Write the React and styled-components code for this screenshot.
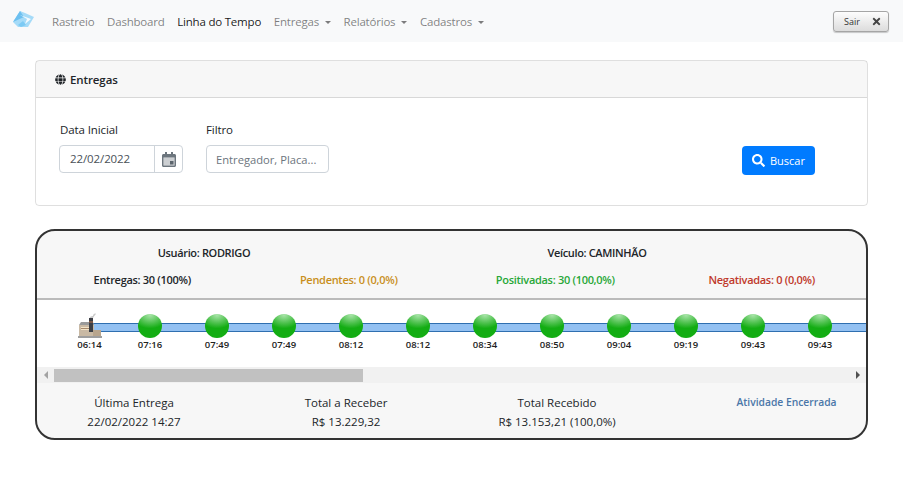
import React from "react";
import styled, { createGlobalStyle } from "styled-components";
import { FaGlobe, FaSearch, FaTimes } from "react-icons/fa";

const GlobalStyle = createGlobalStyle`
  html, body {
    margin: 0;
    padding: 0;
    background: #fff;
    color: #212529;
    font-family: "Open Sans", "Noto Sans", sans-serif;
    font-size: 12px;
  }
  * {
    box-sizing: border-box;
  }
`;

const navItems = [
  { label: "Rastreio" },
  { label: "Dashboard" },
  { label: "Linha do Tempo", active: true },
  { label: "Entregas", caret: true },
  { label: "Relatórios", caret: true },
  { label: "Cadastros", caret: true },
];

const stops = ["07:16", "07:49", "07:49", "08:12", "08:12", "08:34", "08:50", "09:04", "09:19", "09:43", "09:43"];

const Logo = () => (
  <svg width="24" height="22" viewBox="0 0 24 22">
    <polygon points="9,1 14,3 23,7 17,17 7,17 2,12" fill="#a5dbf8" />
    <polygon points="9,1 13,7 2,12" fill="#6cc0f0" />
    <polygon points="9,5 20,9 14,14 16,9" fill="#f4fafe" />
    <polygon points="7,15 12,11 15,15 10,17" fill="#7ccaf4" />
  </svg>
);

const CalendarIcon = () => (
  <svg width="14" height="15" viewBox="0 0 14 15">
    <path
      d="M3 0h2v2h4V0h2v2h1.5c.8 0 1.5.7 1.5 1.5v10c0 .8-.7 1.5-1.5 1.5h-11C.7 15 0 14.300 0 13.500v-10C0 2.700.7 2 1.500 2H3V0zM1.500 5.500v8h11v-8h-11z"
      fill="#6c757d"
    />
    <rect x="1.500" y="5.500" width="11" height="8" fill="#6c757d" opacity="0.35" />
    <rect x="8" y="9" width="3.500" height="3.500" fill="#5c656d" />
  </svg>
);

const FactoryIcon = () => (
  <svg width="24" height="26" viewBox="0 0 24 26">
    <path d="M12 6c-1-2 1-3 3-3 0-2 2-3 3-2-1 1-2 2-3 4-1 1-2 1-3 1z" fill="#c9c9c9" />
    <rect x="1" y="12" width="15" height="11" fill="#c9b9a4" />
    <polygon points="1,12 3,9 15,9 16,12" fill="#9a9a9a" />
    <rect x="3" y="14" width="11" height="3" fill="#f3e3c6" />
    <rect x="3" y="15" width="11" height="1" fill="#a5876a" />
    <rect x="11" y="5" width="4" height="14" fill="#3c3f46" />
    <rect x="11" y="8" width="4" height="2" fill="#7d5a48" />
    <rect x="15" y="17" width="8" height="6" fill="#b8a58d" />
    <rect x="0" y="23" width="24" height="2" fill="#9e9e9e" />
  </svg>
);

const App = () => {
  return (
    <>
      <GlobalStyle />
      <Navbar>
        <Brand>
          <Logo />
        </Brand>
        <NavList>
          {navItems.map((item) => (
            <NavLink key={item.label} $active={item.active} $caret={item.caret}>
              {item.label}
            </NavLink>
          ))}
        </NavList>
        <LogoutButton>
          Sair
          <FaTimes size={11} color="#444" />
        </LogoutButton>
      </Navbar>

      <Page>
        <Card>
          <CardHeader>
            <FaGlobe size={11} />
            Entregas
          </CardHeader>
          <CardBody>
            <Field>
              <Label $inset>Data Inicial</Label>
              <InputGroup>
                <DateValue>22/02/2022</DateValue>
                <Addon>
                  <CalendarIcon />
                </Addon>
              </InputGroup>
            </Field>
            <Field>
              <Label>Filtro</Label>
              <TextInput placeholder="Entregador, Placa..." />
            </Field>
            <SearchButton>
              <FaSearch size={13} />
              Buscar
            </SearchButton>
          </CardBody>
        </Card>

        <TimelineCard>
          <InfoRow>
            <InfoTitle>Usuário: RODRIGO</InfoTitle>
            <InfoTitle>Veículo: CAMINHÃO</InfoTitle>
          </InfoRow>
          <StatusRow>
            <Status $color="#212529">Entregas: 30 (100%)</Status>
            <Status $color="#c98f1c">Pendentes: 0 (0,0%)</Status>
            <Status $color="#28a738">Positivadas: 30 (100,0%)</Status>
            <Status $color="#c0392b">Negativadas: 0 (0,0%)</Status>
          </StatusRow>
          <Track>
            <Origin>
              <FactoryIcon />
              <Time>06:14</Time>
            </Origin>
            {stops.map((time, index) => (
              <Stop key={index}>
                <Ball />
                <Time>{time}</Time>
              </Stop>
            ))}
            <Stop />
          </Track>
          <Scrollbar>
            <Arrow $dir="left" />
            <ScrollArea>
              <Thumb />
            </ScrollArea>
            <Arrow $dir="right" />
          </Scrollbar>
          <Summary>
            <SummaryCell>
              <span>Última Entrega</span>
              <span>22/02/2022 14:27</span>
            </SummaryCell>
            <SummaryCell>
              <span>Total a Receber</span>
              <span>R$ 13.229,32</span>
            </SummaryCell>
            <SummaryCell>
              <span>Total Recebido</span>
              <span>R$ 13.153,21 (100,0%)</span>
            </SummaryCell>
            <Closed>Atividade Encerrada</Closed>
          </Summary>
        </TimelineCard>
      </Page>
    </>
  );
};

export default App;

const Navbar = styled.nav`
  display: flex;
  align-items: center;
  height: 42px;
  padding: 0 14px 0 11px;
  background-color: #f8f9fa;
`;

const Brand = styled.div`
  display: flex;
  width: 24px;
  filter: blur(0.4px);
`;

const NavList = styled.div`
  display: flex;
  flex: 1;
  margin-left: 17px;
  gap: 12.600px;
`;

const NavLink = styled.a`
  font-size: 11.500px;
  letter-spacing: -0.2px;
  color: ${(p) => (p.$active ? "rgba(0,0,0,0.9)" : "rgba(0,0,0,0.5)")};
  &::after {
    content: "";
    display: ${(p) => (p.$caret ? "inline-block" : "none")};
    margin-left: 6px;
    vertical-align: 2px;
    border-top: 3px solid;
    border-left: 3px solid transparent;
    border-right: 3px solid transparent;
  }
`;

const LogoutButton = styled.button`
  display: flex;
  align-items: center;
  justify-content: space-between;
  width: 56px;
  height: 21px;
  padding: 0 6px 0 10px;
  font-family: inherit;
  font-size: 9px;
  color: #333;
  background: linear-gradient(#fdfdfd, #dcdcdc);
  border: 1px solid #a5a5a5;
  border-radius: 3px;
  box-shadow: 0 1px 1px rgba(0, 0, 0, 0.2);
`;

const Page = styled.main`
  display: flex;
  flex-direction: column;
  gap: 23px;
  padding: 18px 35px 0;
`;

const Card = styled.section`
  height: 146px;
  border: 1px solid rgba(0, 0, 0, 0.125);
  border-radius: 4px;
`;

const CardHeader = styled.header`
  display: flex;
  align-items: center;
  gap: 4px;
  height: 37px;
  padding-left: 19px;
  font-size: 11.500px;
  letter-spacing: -0.1px;
  font-weight: 600;
  background-color: rgba(0, 0, 0, 0.03);
  border-bottom: 1px solid rgba(0, 0, 0, 0.125);
`;

const CardBody = styled.div`
  display: flex;
  align-items: flex-start;
  padding: 23px 0 0 23px;
`;

const Field = styled.div`
  display: flex;
  flex-direction: column;
  gap: 6px;
  margin-right: 23px;
`;

const Label = styled.label`
  padding-left: ${(p) => (p.$inset ? "1px" : "0")};
  font-size: 11.500px;
  letter-spacing: -0.1px;
  line-height: 18px;
`;

const InputGroup = styled.div`
  display: flex;
  width: 124px;
  height: 28px;
  border: 1px solid #ced4da;
  border-radius: 4px;
`;

const DateValue = styled.div`
  flex: 1;
  padding-left: 10px;
  font-size: 11.500px;
  letter-spacing: -0.1px;
  line-height: 26px;
  color: #495057;
`;

const Addon = styled.div`
  display: flex;
  align-items: center;
  justify-content: center;
  width: 28px;
  border-left: 1px solid #ced4da;
`;

const TextInput = styled.input`
  width: 123px;
  height: 28px;
  padding: 0 9px;
  font-family: inherit;
  font-size: 11.200px;
  color: #495057;
  background: #fff;
  border: 1px solid #ced4da;
  border-radius: 4px;
  &::placeholder {
    color: #6c757d;
  }
`;

const SearchButton = styled.button`
  display: flex;
  align-items: center;
  justify-content: center;
  gap: 5px;
  width: 73px;
  height: 29px;
  margin: 25px 0 0 390px;
  padding: 0;
  font-family: inherit;
  font-size: 11px;
  color: #fff;
  background-color: #007bff;
  border: none;
  border-radius: 4px;
`;

const TimelineCard = styled.section`
  height: 211px;
  overflow: hidden;
  background-color: #f7f7f7;
  border: 2px solid #333;
  border-radius: 20px;
`;

const InfoRow = styled.div`
  display: grid;
  grid-template-columns: 330px 330px;
  column-gap: 63px;
  padding: 14px 0 0 2px;
`;

const InfoTitle = styled.div`
  font-size: 11px;
  font-weight: 600;
  letter-spacing: -0.35px;
  line-height: 16px;
  text-align: center;
`;

const StatusRow = styled.div`
  display: grid;
  grid-template-columns: repeat(4, 206.500px);
  height: 37px;
  padding: 11px 0 0 2px;
`;

const Status = styled.div`
  font-size: 11px;
  font-weight: 600;
  letter-spacing: -0.3px;
  line-height: 16px;
  text-align: center;
  color: ${(p) => p.$color};
`;

const Track = styled.div`
  display: flex;
  height: 69px;
  padding: 14px 0 0 25.500px;
  overflow: hidden;
  background-color: #fff;
  border-top: 2px solid #bbb;
`;

const Stop = styled.div`
  position: relative;
  display: flex;
  flex: 0 0 67px;
  flex-direction: column;
  align-items: center;
  &::before {
    content: "";
    position: absolute;
    top: 9px;
    left: 0;
    right: 0;
    height: 7px;
    background-color: #93c1f2;
    border-top: 1px solid #2f6fb0;
    border-bottom: 1px solid #2f6fb0;
  }
`;

const Origin = styled(Stop)`
  flex-basis: 54px;
  &::before {
    left: 50%;
  }
  svg {
    position: relative;
    margin-top: -1px;
    margin-bottom: -1px;
  }
`;

const Ball = styled.div`
  position: relative;
  width: 24px;
  height: 24px;
  border-radius: 50%;
  background: radial-gradient(ellipse 75% 55% at 50% 5%, #a8e4a8 0%, #55c455 55%, transparent 100%),
    #13ad13;
`;

const Time = styled.div`
  position: relative;
  font-size: 9.500px;
  font-weight: 600;
  line-height: 14px;
  color: #222;
`;

const Scrollbar = styled.div`
  display: flex;
  align-items: center;
  height: 16px;
  background-color: #f1f1f1;
`;

const Arrow = styled.div`
  flex: 0 0 17px;
  display: flex;
  justify-content: center;
  &::before {
    content: "";
    border-top: 4px solid transparent;
    border-bottom: 4px solid transparent;
    ${(p) => (p.$dir === "left" ? "border-right: 4px solid #a3a3a3;" : "border-left: 4px solid #505050;")}
  }
`;

const ScrollArea = styled.div`
  flex: 1;
`;

const Thumb = styled.div`
  width: 309px;
  height: 13px;
  background-color: #c1c1c1;
`;

const Summary = styled.div`
  display: grid;
  grid-template-columns: 194px 230px 192px 1fr;
  padding: 11px 0 0 0;
`;

const SummaryCell = styled.div`
  display: flex;
  flex-direction: column;
  align-items: center;
  gap: 2px;
  font-size: 11.500px;
  line-height: 17px;
`;

const Closed = styled.div`
  font-size: 10.300px;
  font-weight: 600;
  line-height: 17px;
  text-align: center;
  color: #4a76a8;
  padding-left: 54px;
`;
